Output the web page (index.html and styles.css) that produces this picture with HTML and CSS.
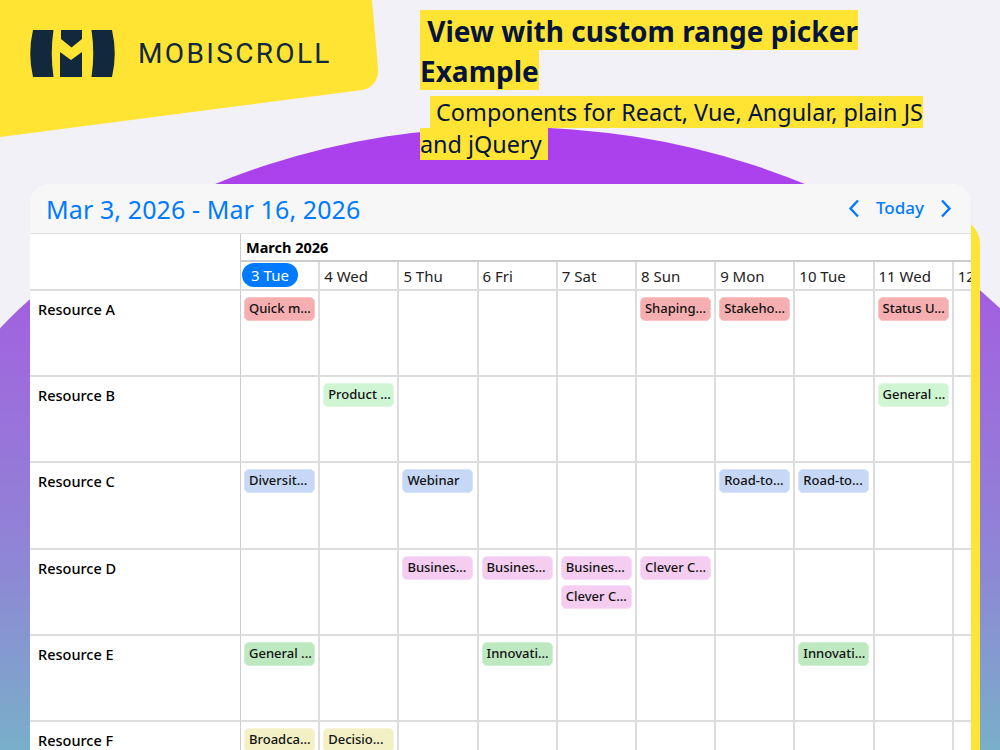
FILE: index.html
```html
<!DOCTYPE html>
<html lang="en">
<head>
    <meta charset="UTF-8">
    <meta name="viewport" content="width=device-width, initial-scale=1.0">
    <title>View with custom range picker Example</title>
    <link rel="stylesheet" href="styles.css">
</head>
<body>

    <!-- background shapes -->
    <div class="bg-circle"></div>
    <svg class="bg-banner" width="380" height="140" viewBox="0 0 380 140">
        <path d="M0 0H372L378 68Q379 86 362 90L0 137Z" fill="#ffe433"/>
    </svg>

    <header class="top">
        <div class="brand">
            <svg class="brand-mark" width="86" height="48" viewBox="30 30 86 48">
                <path fill="#12283d" d="M33 30H53.500Q50 53.500 53.500 77H33Q27.500 53.500 33 30Z"/>
                <path fill="#12283d" d="M91.500 30H112Q117.500 53.500 112 77H91.500Q95 53.500 91.500 30Z"/>
                <path fill="#12283d" d="M61 30H82V39L71.500 47.500L61 39Z"/>
                <path fill="#12283d" d="M60 52L71 60L82 52V77H60Z"/>
            </svg>
            <span class="brand-name">MOBISCROLL</span>
        </div>
        <div class="intro">
            <h1><span>&nbsp;View with custom range picker Example</span></h1>
            <p><span>&nbsp;Components for React, Vue, Angular, plain JS and jQuery&nbsp;</span></p>
        </div>
    </header>

    <main class="card-wrap">
        <div class="card">
            <div class="card-head">
                <div class="range">Mar 3, 2026 - Mar 16, 2026</div>
                <div class="nav">
                    <svg width="12" height="19" viewBox="0 0 12 19"><path d="M10 1.500L2.500 9.500L10 17.500" fill="none" stroke="#007bff" stroke-width="2.400"/></svg>
                    <span class="today">Today</span>
                    <svg width="12" height="19" viewBox="0 0 12 19"><path d="M2 1.500L9.500 9.500L2 17.500" fill="none" stroke="#007bff" stroke-width="2.400"/></svg>
                </div>
            </div>

            <div class="timeline">
                <div class="corner"></div>
                <div class="heads">
                    <div class="month">March 2026</div>
                    <div class="days">
                        <div class="day"><span class="pill">3 Tue</span></div>
                        <div class="day">4 Wed</div>
                        <div class="day">5 Thu</div>
                        <div class="day">6 Fri</div>
                        <div class="day">7 Sat</div>
                        <div class="day">8 Sun</div>
                        <div class="day">9 Mon</div>
                        <div class="day">10 Tue</div>
                        <div class="day">11 Wed</div>
                        <div class="day">12 Thu</div>
                    </div>
                </div>

                <div class="res">Resource A</div>
                <div class="cells">
                    <div class="cell"><div class="ev red">Quick m...</div></div>
                    <div class="cell"></div>
                    <div class="cell"></div>
                    <div class="cell"></div>
                    <div class="cell"></div>
                    <div class="cell"><div class="ev red">Shaping...</div></div>
                    <div class="cell"><div class="ev red">Stakeho...</div></div>
                    <div class="cell"></div>
                    <div class="cell"><div class="ev red">Status U...</div></div>
                    <div class="cell"></div>
                </div>

                <div class="res">Resource B</div>
                <div class="cells">
                    <div class="cell"></div>
                    <div class="cell"><div class="ev mint">Product ...</div></div>
                    <div class="cell"></div>
                    <div class="cell"></div>
                    <div class="cell"></div>
                    <div class="cell"></div>
                    <div class="cell"></div>
                    <div class="cell"></div>
                    <div class="cell"><div class="ev mint">General ...</div></div>
                    <div class="cell"></div>
                </div>

                <div class="res">Resource C</div>
                <div class="cells">
                    <div class="cell"><div class="ev blue">Diversit...</div></div>
                    <div class="cell"></div>
                    <div class="cell"><div class="ev blue">Webinar</div></div>
                    <div class="cell"></div>
                    <div class="cell"></div>
                    <div class="cell"></div>
                    <div class="cell"><div class="ev blue">Road-to...</div></div>
                    <div class="cell"><div class="ev blue">Road-to...</div></div>
                    <div class="cell"></div>
                    <div class="cell"></div>
                </div>

                <div class="res">Resource D</div>
                <div class="cells">
                    <div class="cell"></div>
                    <div class="cell"></div>
                    <div class="cell"><div class="ev pink">Busines...</div></div>
                    <div class="cell"><div class="ev pink">Busines...</div></div>
                    <div class="cell"><div class="ev pink">Busines...</div><div class="ev pink">Clever C...</div></div>
                    <div class="cell"><div class="ev pink">Clever C...</div></div>
                    <div class="cell"></div>
                    <div class="cell"></div>
                    <div class="cell"></div>
                    <div class="cell"></div>
                </div>

                <div class="res">Resource E</div>
                <div class="cells">
                    <div class="cell"><div class="ev green">General ...</div></div>
                    <div class="cell"></div>
                    <div class="cell"></div>
                    <div class="cell"><div class="ev green">Innovati...</div></div>
                    <div class="cell"></div>
                    <div class="cell"></div>
                    <div class="cell"></div>
                    <div class="cell"><div class="ev green">Innovati...</div></div>
                    <div class="cell"></div>
                    <div class="cell"></div>
                </div>

                <div class="res">Resource F</div>
                <div class="cells">
                    <div class="cell"><div class="ev sand">Broadca...</div></div>
                    <div class="cell"><div class="ev sand">Decisio...</div></div>
                    <div class="cell"></div>
                    <div class="cell"></div>
                    <div class="cell"></div>
                    <div class="cell"></div>
                    <div class="cell"></div>
                    <div class="cell"></div>
                    <div class="cell"></div>
                    <div class="cell"></div>
                </div>
            </div>
        </div>
    </main>

</body>
</html>
```

FILE: styles.css
```css
html, body {
    height: 100%;
}
body {
    font-family: "Noto Sans", "Open Sans", sans-serif;
    background-color: #f1f1f7;
    margin: 0;
    padding-top: 10px;
    box-sizing: border-box;
    overflow: hidden;
    position: relative;
}
.bg-circle {
    position: absolute;
    left: -126px;
    top: 127px;
    width: 1272px;
    height: 1000px;
    border-radius: 50%;
    background: linear-gradient(180deg, #ab40ee 0, #ab42ec 60px, #a066de 200px, #8f85d5 430px, #79afc9 623px);
}
.bg-banner {
    position: absolute;
    left: 0;
    top: 0;
}
.top {
    position: relative;
    display: flex;
    height: 149px;
}
.brand {
    width: 420px;
    display: flex;
    align-items: flex-start;
    padding: 20px 0 0 30px;
    box-sizing: border-box;
}
.brand-name {
    font-family: Roboto, sans-serif;
    font-size: 28px;
    font-weight: 400;
    line-height: 48px;
    margin-left: 22px;
    letter-spacing: 2.350px;
    color: #12283d;
}
.intro {
    width: 510px;
    margin-top: 1px;
    color: #04143c;
}
.intro h1 {
    margin: 0;
    font-size: 28px;
    line-height: 40px;
    font-weight: 700;
}
.intro p {
    margin: 5px 0 0;
    font-size: 23.400px;
    line-height: 32px;
    font-weight: 400;
}
.intro h1 span {
    background-color: #ffe433;
    padding: 2px 0 0;
}
.intro p span {
    background-color: #ffe433;
    margin-left: 10px;
}
.card-wrap {
    position: relative;
    margin: 25px 29px 0 30px;
}
.card-wrap::before {
    content: "";
    position: absolute;
    left: 40px;
    right: -9px;
    top: 34px;
    height: 532px;
    background-color: #ffe433;
    border-radius: 26px 26px 0 0;
}
.card {
    position: relative;
    background-color: #fff;
    border-radius: 20px 20px 0 0;
    overflow: hidden;
    height: 566px;
}
.card-head {
    display: flex;
    justify-content: space-between;
    align-items: center;
    height: 49px;
    padding: 0 19px 0 16px;
    background-color: #f7f7f8;
    border-bottom: 1px solid #e0e0e0;
}
.range {
    font-size: 25px;
    letter-spacing: 0.100px;
    color: #007bff;
}
.nav {
    display: flex;
    align-items: center;
    color: #007bff;
}
.today {
    font-size: 17px;
    font-weight: 500;
    line-height: 20px;
    margin: -2px 16px 0;
}
.timeline {
    display: grid;
    grid-template-columns: 211px 1fr;
    grid-auto-rows: 86.200px;
    grid-template-rows: 57px;
}
.corner, .res {
    border-right: 1px solid #ccc;
}
.corner {
    border-bottom: 2px solid #ddd;
}
.heads {
    border-bottom: 2px solid #ddd;
    overflow: hidden;
}
.month {
    height: 26px;
    line-height: 27px;
    padding-left: 5px;
    font-size: 14.500px;
    font-weight: 700;
    color: #000;
    border-bottom: 2px solid #ccc;
}
.days, .cells {
    display: grid;
    grid-template-columns: repeat(10, 79.200px);
    height: 100%;
    box-sizing: border-box;
}
.day {
    height: 27px;
    line-height: 29px;
    padding-left: 4px;
    font-size: 15px;
    color: #222;
    border-right: 2px solid #ddd;
    white-space: nowrap;
    overflow: hidden;
}
.day:first-child {
    padding-left: 1px;
}
.pill {
    display: inline-block;
    width: 56px;
    height: 24px;
    line-height: 24px;
    margin-top: 1px;
    text-align: center;
    vertical-align: top;
    border-radius: 12px;
    background-color: #007bff;
    color: #fff;
}
.res {
    padding: 8px 0 0 8px;
    font-size: 14.500px;
    font-weight: 500;
    color: #000;
    border-bottom: 2px solid #ddd;
}
.cells {
    border-bottom: 2px solid #ddd;
    overflow: hidden;
}
.cell {
    border-right: 2px solid #ddd;
    padding: 6px 3px 0;
    display: flex;
    flex-direction: column;
    gap: 5px;
}
.ev {
    width: 71px;
    height: 24px;
    line-height: 20px;
    box-sizing: border-box;
    padding-left: 4px;
    border-radius: 5px;
    border: 1px solid transparent;
    font-size: 13px;
    font-weight: 500;
    color: #111;
    white-space: nowrap;
    overflow: hidden;
}
.red { background-color: #f6afb0; border-color: #f8c4c4; }
.mint { background-color: #d0f5d3; border-color: #dff8e1; }
.blue { background-color: #c6d8f5; border-color: #d6e3f8; }
.pink { background-color: #f5cdf0; border-color: #f8dcf5; }
.green { background-color: #bde8c0; border-color: #d0f0d2; }
.sand { background-color: #f3f0c6; border-color: #f7f5d6; }
```
